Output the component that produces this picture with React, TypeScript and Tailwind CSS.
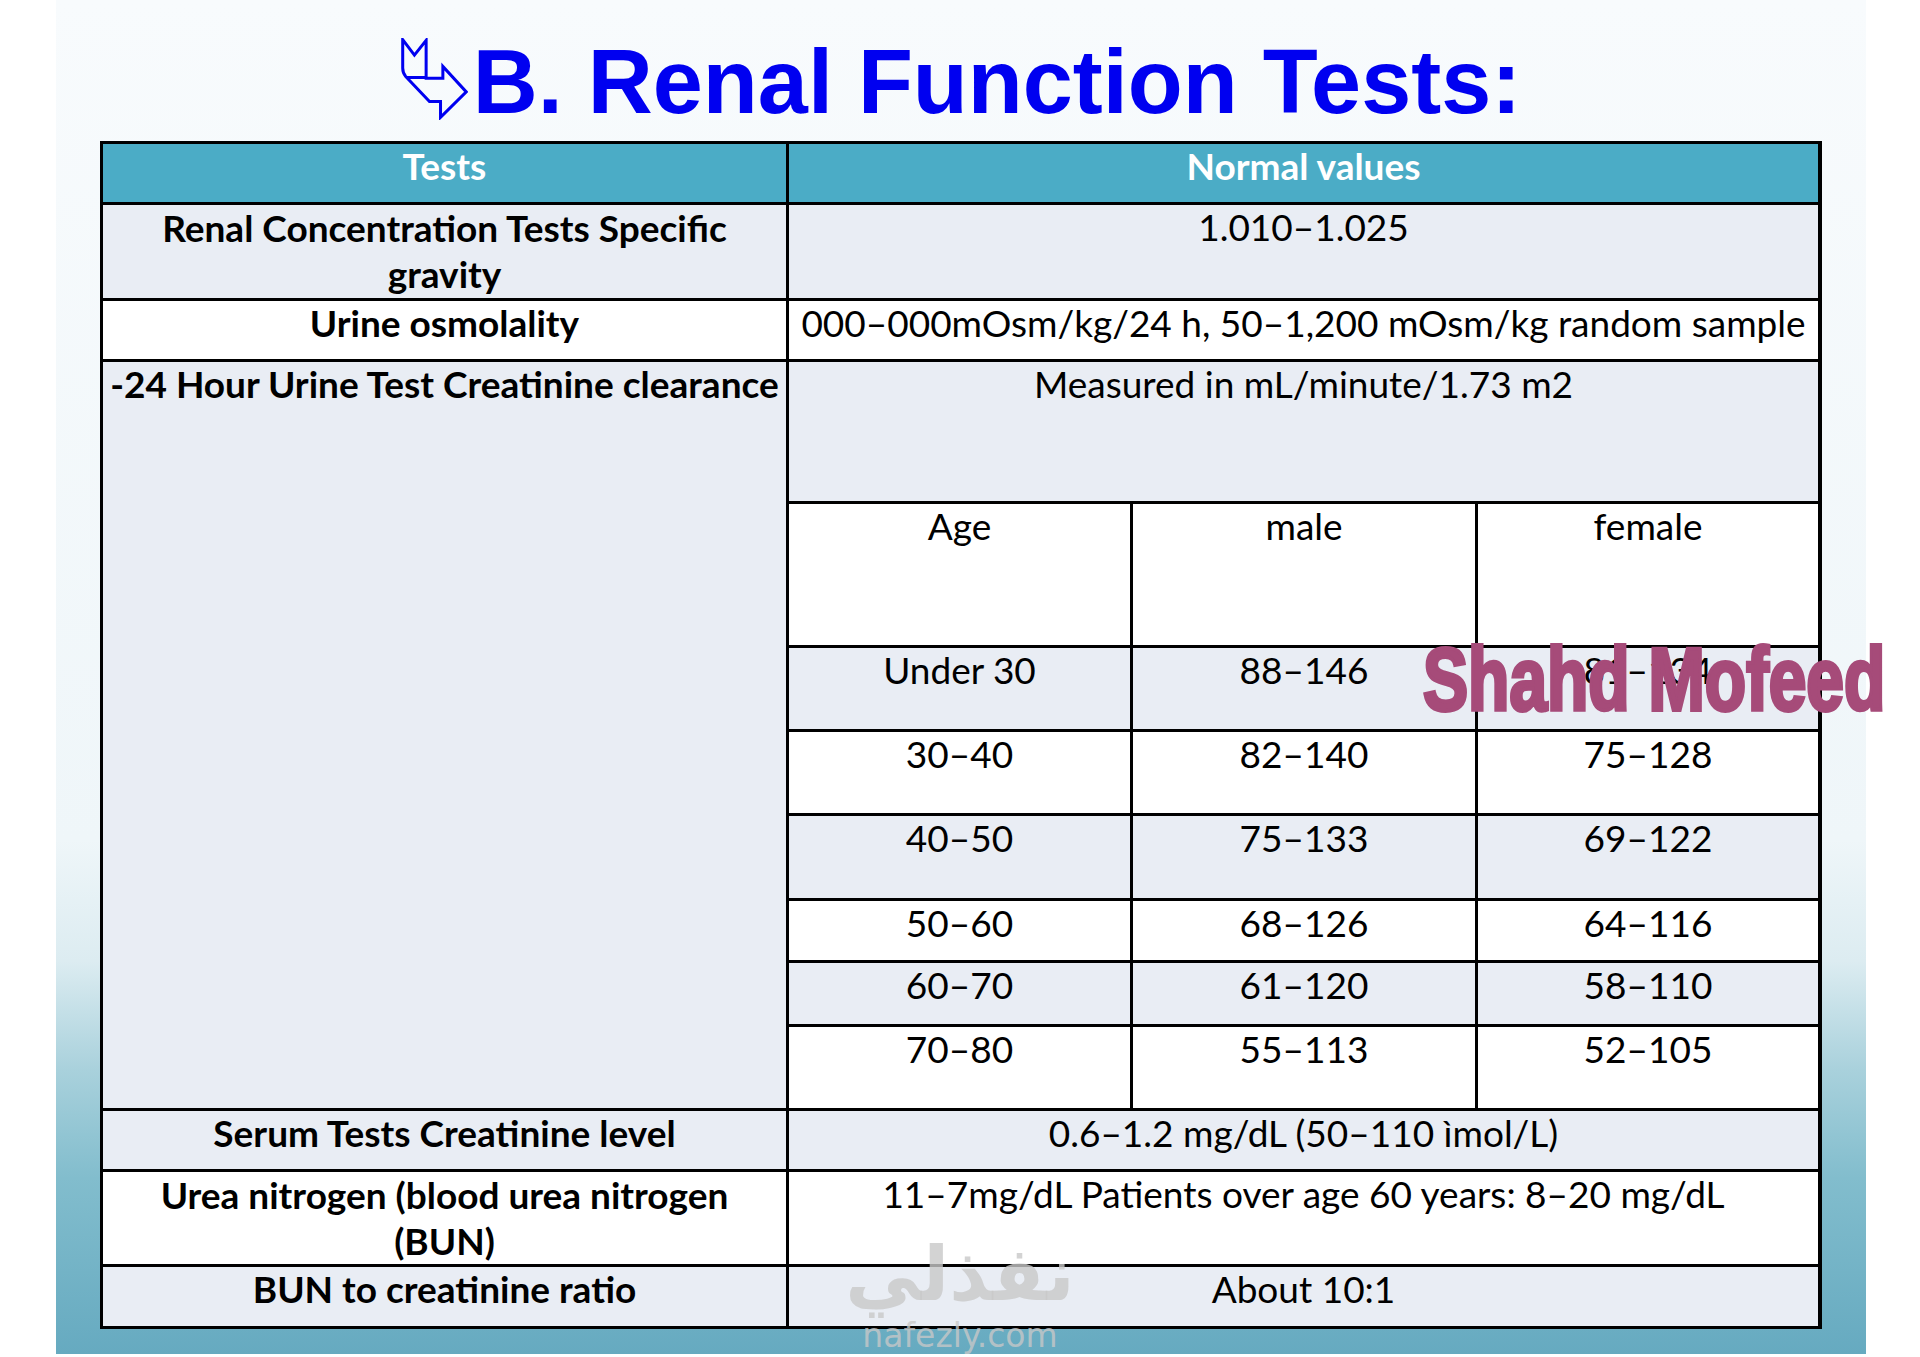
import React from 'react';

const light = 'bg-[#e9edf4]';
const white = 'bg-white';
const head = 'bg-[#4bacc6] text-white font-bold';

function Cell({ children, className = '' }: { children?: React.ReactNode; className?: string }) {
  return <div className={`text-center leading-[44px] ${className}`}>{children}</div>;
}

const ages = [
  ['Under 30', '88–146', '81–134', light],
  ['30–40', '82–140', '75–128', white],
  ['40–50', '75–133', '69–122', light],
  ['50–60', '68–126', '64–116', white],
  ['60–70', '61–120', '58–110', light],
  ['70–80', '55–113', '52–105', white],
];

function BentArrow() {
  return (
    <svg width="67" height="82" viewBox="50 25 200 245" className="mt-[1px] shrink-0">
      <path
        d="M55 30 L90 76 L125 32 L125 145 L175 145 L175 110 L245 186 L168 262 L168 215 L135 215 L64 140 Q55 130 55 115 Z"
        fill="none"
        stroke="#0000f0"
        strokeWidth="9"
        strokeLinejoin="miter"
      />
      <path d="M66 143 L125 143" fill="none" stroke="#0000f0" strokeWidth="9" />
    </svg>
  );
}

export default function App() {
  return (
    <div className="relative w-[1920px] h-[1357px] bg-white overflow-hidden">
      <div className="ml-[56px] w-[1810px] h-[1354px] px-[44px] bg-[linear-gradient(to_bottom,#f8fbfd_0%,#eff6f9_62%,#dcecf1_71%,#a9d1dc_79%,#82bdcd_87%,#66aac0_100%)]">
        {/* title */}
        <div className="flex items-start justify-center gap-[5px] pt-[37px]">
          <BentArrow />
          <h1 className="text-[90px] leading-[90px] font-bold text-[#0000f0] font-['Liberation_Sans',Arial,sans-serif]">
            B. Renal Function Tests:
          </h1>
        </div>

        {/* table */}
        <div className="mt-[14px] grid grid-cols-[683px_341px_342px_340px] grid-rows-[58px_93px_58px_139px_141px_81px_81px_82px_59px_61px_81px_58px_92px_59px] gap-[3px] bg-black p-[3px] text-[37px] text-black font-['Lato','Open_Sans',sans-serif]">
          <Cell className={head}>Tests</Cell>
          <Cell className={`${head} col-span-3`}>Normal values</Cell>

          <Cell className={`${light} font-bold leading-[46px]`}>
            Renal Concentration Tests Specific
            <br />
            gravity
          </Cell>
          <Cell className={`${light} col-span-3`}>1.010–1.025</Cell>

          <Cell className={`${white} font-bold`}>Urine osmolality</Cell>
          <Cell className={`${white} col-span-3 whitespace-nowrap`}>
            000–000mOsm/kg/24 h, 50–1,200 mOsm/kg random sample
          </Cell>

          <Cell className={`${light} row-span-8 font-bold whitespace-nowrap`}>
            -24 Hour Urine Test Creatinine clearance
          </Cell>
          <Cell className={`${light} col-span-3`}>Measured in mL/minute/1.73 m2</Cell>

          <Cell className={white}>Age</Cell>
          <Cell className={white}>male</Cell>
          <Cell className={white}>female</Cell>

          {ages.map(([age, male, female, bg]) => (
            <React.Fragment key={age}>
              <Cell className={bg}>{age}</Cell>
              <Cell className={bg}>{male}</Cell>
              <Cell className={bg}>{female}</Cell>
            </React.Fragment>
          ))}

          <Cell className={`${light} font-bold`}>Serum Tests Creatinine level</Cell>
          <Cell className={`${light} col-span-3`}>0.6–1.2 mg/dL (50–110 ìmol/L)</Cell>

          <Cell className={`${white} font-bold leading-[46px]`}>
            Urea nitrogen (blood urea nitrogen
            <br />
            (BUN)
          </Cell>
          <Cell className={`${white} col-span-3`}>11–7mg/dL Patients over age 60 years: 8–20 mg/dL</Cell>

          <Cell className={`${light} font-bold`}>BUN to creatinine ratio</Cell>
          <Cell className={`${light} col-span-3`}>About 10:1</Cell>
        </div>
      </div>

      {/* overlay watermarks */}
      <div className="absolute left-[1423px] top-[635px] origin-left scale-x-[0.76] whitespace-nowrap text-[89px] leading-[89px] font-bold text-[#a64b79] [-webkit-text-stroke:4px_#a64b79] font-['Liberation_Sans',Arial,sans-serif]">
        Shahd Mofeed
      </div>
      <div className="absolute left-[845px] top-[1226px] w-[230px] flex flex-col items-center text-[rgba(200,200,200,0.8)] pointer-events-none">
        <div dir="rtl" className="text-[75px] leading-[96px] font-bold font-['DejaVu_Sans',sans-serif]">
          نفذلي
        </div>
        <div className="-mt-[4px] text-[33px] leading-[36px] font-['DejaVu_Sans',sans-serif]">nafezly.com</div>
      </div>
    </div>
  );
}
